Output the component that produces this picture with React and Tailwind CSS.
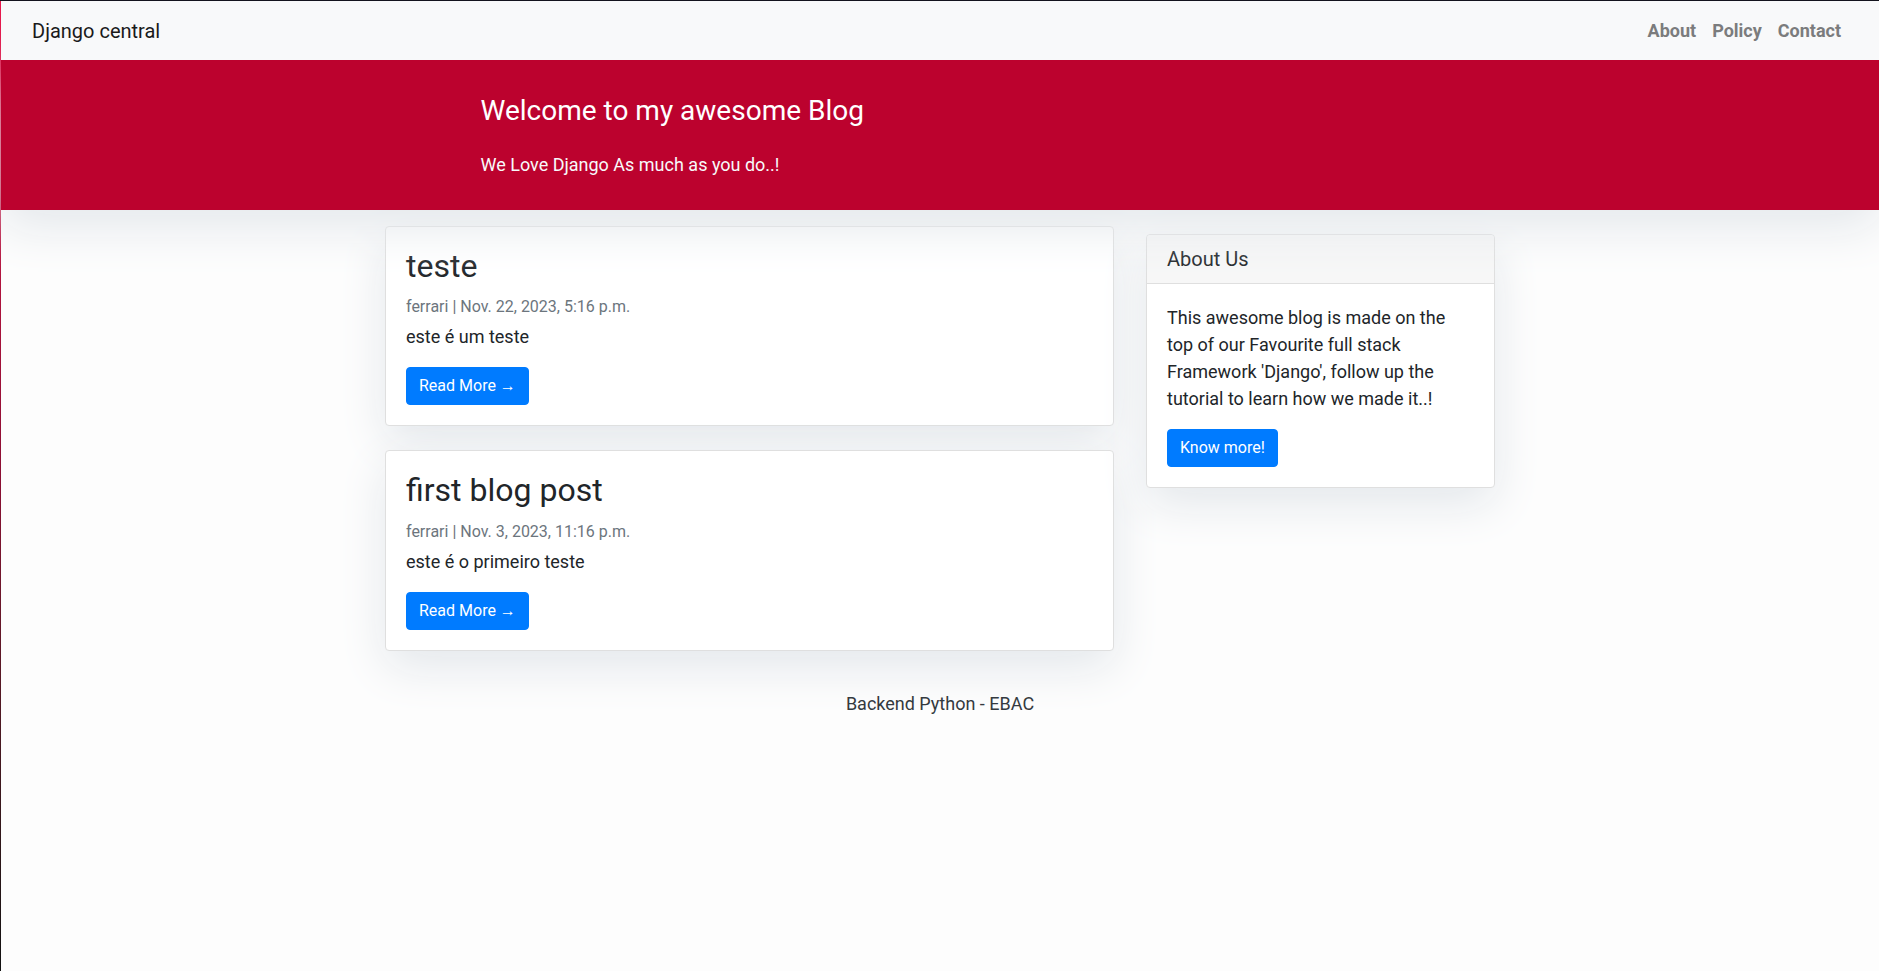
export default function App() {
  const posts = [
    {
      title: "teste",
      author: "ferrari",
      date: "Nov. 22, 2023, 5:16 p.m.",
      text: "este é um teste",
    },
    {
      title: "first blog post",
      author: "ferrari",
      date: "Nov. 3, 2023, 11:16 p.m.",
      text: "este é o primeiro teste",
    },
  ];

  return (
    <div
      className="min-h-screen flex border-t border-[#13131d] bg-[#fdfdfd] text-[#212529]"
      style={{ fontFamily: "Roboto, 'Noto Sans', sans-serif" }}
    >
      {/* window edge */}
      <div className="w-px shrink-0 bg-gradient-to-b from-[#e8194d] via-[#8a0f33] to-[#111]" />

      <div className="flex-1 flex flex-col">
        {/* Navbar */}
        <nav className="h-[59px] flex items-center justify-between bg-[#f8f9fa] pl-[31px] pr-[38px] relative z-20">
          <a className="text-[20px] text-[#1a1a1a] leading-none">
            Django central
          </a>
          <div className="flex items-center gap-4 text-[18px] font-bold text-[#7b7c7d]">
            <a>About</a>
            <a>Policy</a>
            <a>Contact</a>
          </div>
        </nav>

        {/* Masthead */}
        <header className="bg-[#bc022e] pt-[34px] pb-[16px] shadow-[0_16px_48px_#e3e7eb] relative z-10">
          <div className="w-[919px] mx-auto">
            <h3 className="text-[28px] leading-[1.2] text-white mb-[23px]">
              Welcome to my awesome Blog
            </h3>
            <p className="text-[18px] leading-[27px] text-[#f8f9fa] mb-4">
              We Love Django As much as you do..!
            </p>
          </div>
        </header>

        {/* Content */}
        <div className="w-[1110px] mx-auto flex items-start gap-8">
          <div className="w-[729px] mt-4 flex flex-col gap-6">
            {posts.map((post) => (
              <div
                key={post.title}
                className="bg-white border border-[#dfdfdf] rounded p-5 shadow-[0_16px_48px_#e3e7eb]"
              >
                <h2 className="text-[32px] leading-[1.2] mb-3">
                  {post.title}
                </h2>
                <p className="text-[16px] leading-[1.2] text-[#6c757d] mb-[7px]">
                  {post.author} | {post.date}
                </p>
                <p className="text-[18px] leading-[27px] mb-[17px]">
                  {post.text}
                </p>
                <a className="inline-block bg-[#007bff] border border-[#007bff] text-white text-[16px] leading-[1.5] px-3 py-[6px] rounded">
                  Read More &rarr;
                </a>
              </div>
            ))}
          </div>

          <div className="w-[349px] mt-6 bg-white border border-[#dfdfdf] rounded shadow-[0_16px_48px_#e3e7eb]">
            <h5 className="text-[20px] leading-[1.2] px-5 py-3 bg-[#f7f7f7] border-b border-[#dfdfdf] rounded-t">
              About Us
            </h5>
            <div className="p-5">
              <p className="text-[18px] leading-[27px] mb-[17px] whitespace-nowrap">
                This awesome blog is made on the
                <br />
                top of our Favourite full stack
                <br />
                Framework 'Django', follow up the
                <br />
                tutorial to learn how we made it..!
              </p>
              <a className="inline-block bg-[#007bff] border border-[#007bff] text-white text-[16px] leading-[1.5] px-3 py-[6px] rounded">
                Know more!
              </a>
            </div>
          </div>
        </div>

        {/* Footer */}
        <footer className="py-4 mt-[23px]">
          <p className="text-center text-[18px] leading-[27px] text-[#343a40]">
            Backend Python - EBAC
          </p>
        </footer>
      </div>
    </div>
  );
}
